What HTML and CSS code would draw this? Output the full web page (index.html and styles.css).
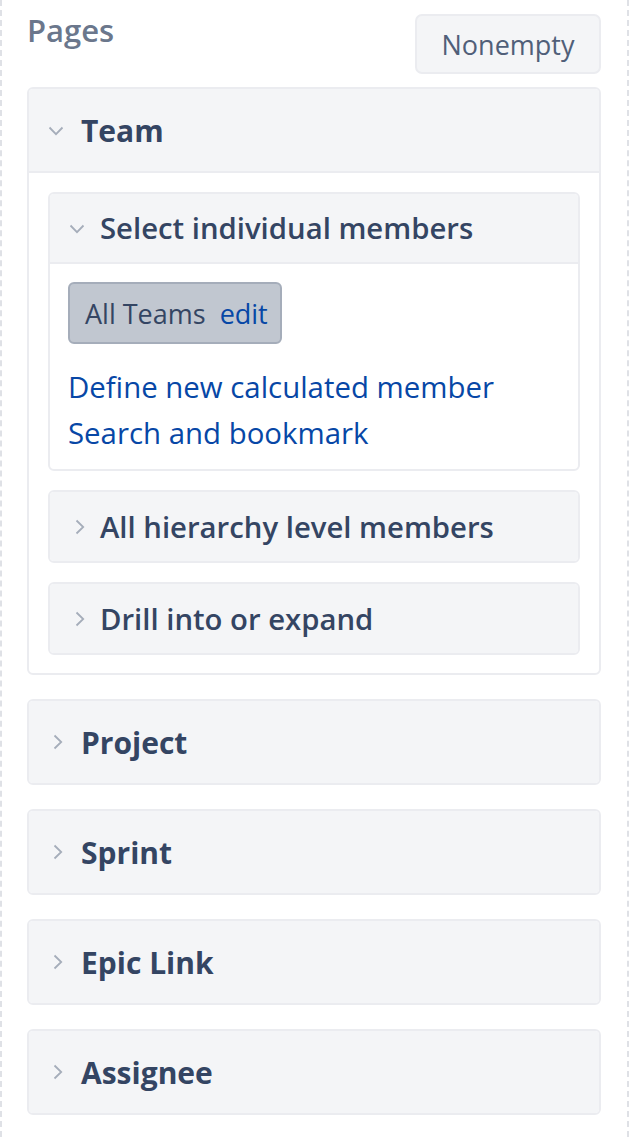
FILE: index.html
```html
<!DOCTYPE html>
<html>
<head>
<meta charset="utf-8">
<link rel="stylesheet" href="styles.css">
</head>
<body>
<div class="sidebar">
  <div class="top-row">
    <div class="title">Pages</div>
    <button class="btn">Nonempty</button>
  </div>

  <div class="panel open">
    <div class="panel-head">
      <svg class="chev-down" width="16" height="10" viewBox="0 0 16 10"><path d="M1.5 1.5 L8 8.2 L14.5 1.5" fill="none" stroke="#a5adba" stroke-width="1.8"/></svg>
      <span class="panel-title">Team</span>
    </div>
    <div class="panel-body">
      <div class="sub open">
        <div class="sub-head">
          <svg class="chev-down" width="16" height="10" viewBox="0 0 16 10"><path d="M1.5 1.5 L8 8.2 L14.5 1.5" fill="none" stroke="#a5adba" stroke-width="1.8"/></svg>
          <span class="sub-title">Select individual members</span>
        </div>
        <div class="sub-body">
          <div class="chip"><span class="chip-name">All Teams</span><a class="chip-link">edit</a></div>
          <a class="link">Define new calculated member</a>
          <a class="link">Search and bookmark</a>
        </div>
      </div>
      <div class="sub">
        <div class="sub-head">
          <svg class="chev-right" width="10" height="16" viewBox="0 0 10 16"><path d="M1.5 1.5 L8.2 8 L1.5 14.5" fill="none" stroke="#a5adba" stroke-width="1.8"/></svg>
          <span class="sub-title">All hierarchy level members</span>
        </div>
      </div>
      <div class="sub">
        <div class="sub-head">
          <svg class="chev-right" width="10" height="16" viewBox="0 0 10 16"><path d="M1.5 1.5 L8.2 8 L1.5 14.5" fill="none" stroke="#a5adba" stroke-width="1.8"/></svg>
          <span class="sub-title">Drill into or expand</span>
        </div>
      </div>
    </div>
  </div>

  <div class="panel">
    <div class="panel-head">
      <svg class="chev-right" width="10" height="16" viewBox="0 0 10 16"><path d="M1.5 1.5 L8.2 8 L1.5 14.5" fill="none" stroke="#a5adba" stroke-width="1.8"/></svg>
      <span class="panel-title">Project</span>
    </div>
  </div>
  <div class="panel">
    <div class="panel-head">
      <svg class="chev-right" width="10" height="16" viewBox="0 0 10 16"><path d="M1.5 1.5 L8.2 8 L1.5 14.5" fill="none" stroke="#a5adba" stroke-width="1.8"/></svg>
      <span class="panel-title">Sprint</span>
    </div>
  </div>
  <div class="panel">
    <div class="panel-head">
      <svg class="chev-right" width="10" height="16" viewBox="0 0 10 16"><path d="M1.5 1.5 L8.2 8 L1.5 14.5" fill="none" stroke="#a5adba" stroke-width="1.8"/></svg>
      <span class="panel-title">Epic Link</span>
    </div>
  </div>
  <div class="panel">
    <div class="panel-head">
      <svg class="chev-right" width="10" height="16" viewBox="0 0 10 16"><path d="M1.5 1.5 L8.2 8 L1.5 14.5" fill="none" stroke="#a5adba" stroke-width="1.8"/></svg>
      <span class="panel-title">Assignee</span>
    </div>
  </div>
</div>
</body>
</html>
```

FILE: styles.css
```css
* { box-sizing: border-box; }
html, body {
  margin: 0;
  padding: 0;
  background: #ffffff;
}
body {
  font-family: "Open Sans", "Noto Sans", sans-serif;
  color: #344563;
}
.sidebar {
  width: 629px;
  min-height: 1137px;
  border-left: 2px dashed #dfe1e6;
  border-right: 2px dashed #dfe1e6;
  padding: 14px 26px 20px 25px;
  display: flex;
  flex-direction: column;
  gap: 24px;
}
.top-row {
  display: flex;
  justify-content: space-between;
  align-items: flex-start;
  margin-bottom: -11px;
}
.title {
  font-size: 31px;
  font-weight: 600;
  color: #6b778c;
  line-height: 36px;
  margin-top: -2px;
}
.btn {
  font-family: inherit;
  font-size: 27px;
  color: #505f79;
  background: #f4f5f7;
  border: 2px solid #ebecf0;
  border-radius: 7px;
  height: 60px;
  width: 186px;
  padding: 0;
  line-height: 1;
}
.panel {
  border: 2px solid #ebecf0;
  border-radius: 6px;
  background: #ffffff;
  overflow: hidden;
}
.panel-head {
  height: 82px;
  background: #f4f5f7;
  display: flex;
  align-items: center;
  padding-left: 19px;
}
.panel.open > .panel-head {
  border-bottom: 2px solid #ebecf0;
  height: 84px;
}
.panel-head > .chev-down { margin-right: 17px; flex: none; margin-top: 2px; }
.panel-head > .chev-right { margin-left: 5px; margin-right: 18px; flex: none; }
.panel-title {
  font-size: 30px;
  font-weight: 700;
  color: #344563;
}
.panel-body {
  padding: 19px 19px 18px 19px;
  display: flex;
  flex-direction: column;
  gap: 19px;
}
.sub {
  border: 2px solid #ebecf0;
  border-radius: 6px;
  overflow: hidden;
}
.sub-head {
  height: 69px;
  background: #f4f5f7;
  display: flex;
  align-items: center;
  padding-left: 19px;
}
.sub.open > .sub-head {
  border-bottom: 2px solid #ebecf0;
  height: 70px;
}
.sub-head > .chev-down { margin-right: 15px; flex: none; margin-top: 2px; }
.sub-head > .chev-right { margin-left: 6px; margin-right: 15px; flex: none; }
.sub-title {
  font-size: 29.3px;
  font-weight: 600;
  color: #344563;
}
.sub-body {
  padding: 18px 18px 13px 18px;
  display: flex;
  flex-direction: column;
  align-items: flex-start;
}
.chip {
  background: #c1c7d0;
  border: 2px solid #a5adba;
  border-radius: 6px;
  height: 62px;
  padding: 0 12px 0 15px;
  display: flex;
  align-items: center;
  gap: 14px;
  font-size: 27px;
  margin-bottom: 20px;
}
.chip-name { color: #344563; }
.chip-link { color: #0747a6; cursor: pointer; }
.link {
  color: #0747a6;
  font-size: 29.4px;
  line-height: 46px;
  cursor: pointer;
}
```
